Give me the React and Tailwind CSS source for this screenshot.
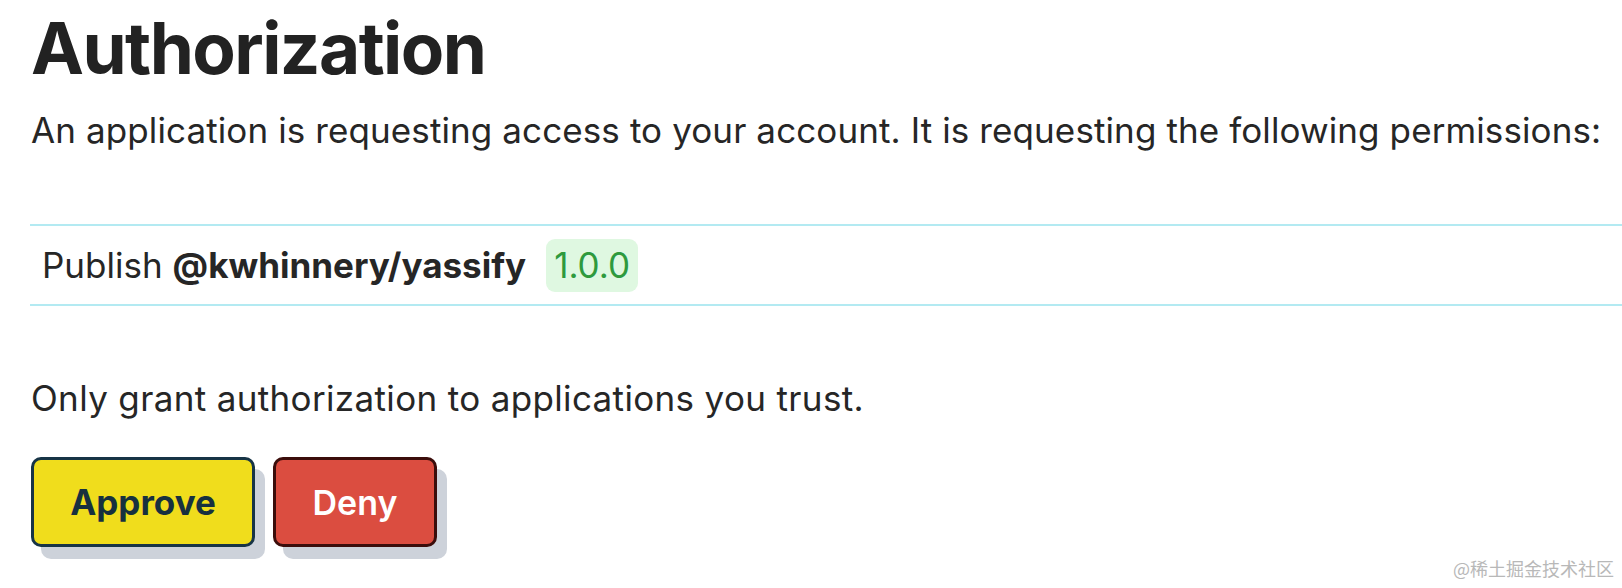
export default function App() {
  return (
    <div className="relative w-[1622px] h-[588px] bg-white overflow-hidden font-['Inter',sans-serif] text-[#262626]">
      <div className="pl-[30px] pt-[12px]">
        <h1 className="text-[71px] leading-[72px] font-bold text-[#222222] tracking-[-0.022em] pl-[1px]">
          Authorization
        </h1>
        <p className="mt-[26px] text-[35px] leading-[40px] tracking-[0.003em] pl-[1px]">
          An application is requesting access to your account. It is requesting the following permissions:
        </p>
        <div className="mt-[74px] border-y-2 border-[#b3eaf2] h-[82px] flex items-center pl-[12px] text-[35px]">
          <span>Publish</span>
          <span className="ml-[10px] font-bold">@kwhinnery/yassify</span>
          <span className="ml-[20px] h-[53px] px-[8px] flex items-center rounded-[9px] bg-[#dff8e1] text-[#2e9a3d]">
            1.0.0
          </span>
        </div>
        <p className="mt-[72px] text-[35px] leading-[40px] tracking-[0.01em] pl-[1px]">
          Only grant authorization to applications you trust.
        </p>
        <div className="mt-[39px] flex gap-[18px] pl-[1px]">
          <button className="w-[224px] h-[90px] rounded-[10px] border-[3px] border-[#173446] bg-[#f0dd1c] text-[#17303f] text-[35px] font-bold shadow-[10px_12px_0_0_#cdd2da]">
            Approve
          </button>
          <button className="w-[164px] h-[90px] rounded-[10px] border-[3px] border-[#3b0d0b] bg-[#db4d40] text-white text-[34px] font-semibold shadow-[10px_12px_0_0_#cdd2da]">
            Deny
          </button>
        </div>
      </div>
      <div className="absolute right-[8px] bottom-[6px] text-[18px] text-[#b8b8b8] font-['Noto_Sans_CJK_SC',sans-serif]">
        @稀土掘金技术社区
      </div>
    </div>
  );
}
